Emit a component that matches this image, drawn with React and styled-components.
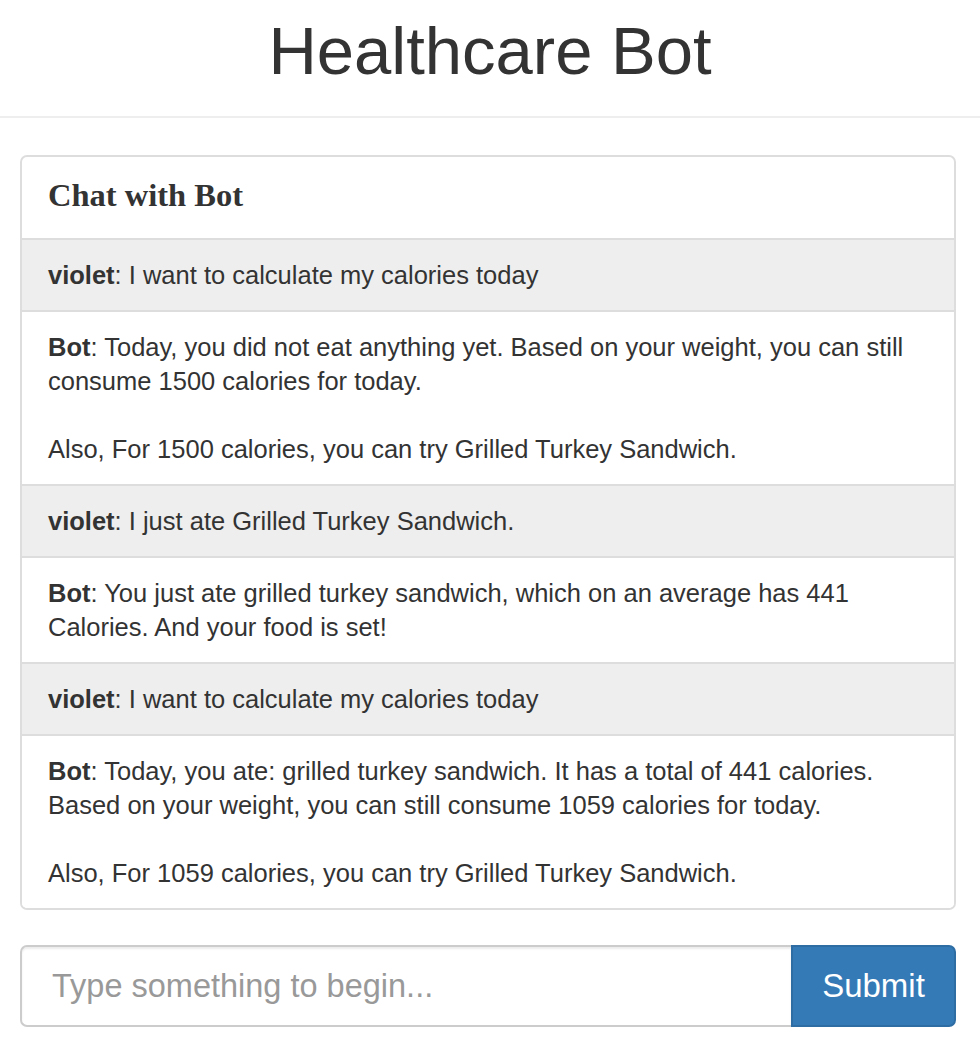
import React, { useState } from "react";
import styled, { createGlobalStyle } from "styled-components";

const GlobalStyle = createGlobalStyle`
  * { box-sizing: border-box; }
  body {
    margin: 0;
    background: #fff;
    color: #333;
    font-family: "Liberation Sans", Arial, sans-serif;
  }
`;

const messages = [
  { from: "violet", text: "I want to calculate my calories today" },
  {
    from: "Bot",
    text:
      "Today, you did not eat anything yet. Based on your weight, you can still consume 1500 calories for today.\n\nAlso, For 1500 calories, you can try Grilled Turkey Sandwich.",
  },
  { from: "violet", text: "I just ate Grilled Turkey Sandwich." },
  {
    from: "Bot",
    text:
      "You just ate grilled turkey sandwich, which on an average has 441 Calories. And your food is set!",
  },
  { from: "violet", text: "I want to calculate my calories today" },
  {
    from: "Bot",
    text:
      "Today, you ate: grilled turkey sandwich. It has a total of 441 calories. Based on your weight, you can still consume 1059 calories for today.\n\nAlso, For 1059 calories, you can try Grilled Turkey Sandwich.",
  },
];

function App() {
  const [value, setValue] = useState("");

  return (
    <>
      <GlobalStyle />
      <Header>
        <Title>Healthcare Bot</Title>
      </Header>
      <Container>
        <Panel>
          <PanelHeading>Chat with Bot</PanelHeading>
          {messages.map((m, i) => (
            <Message key={i} user={m.from !== "Bot"}>
              <b>{m.from}</b>: {m.text}
            </Message>
          ))}
        </Panel>
        <InputGroup>
          <TextInput
            placeholder="Type something to begin..."
            value={value}
            onChange={(e) => setValue(e.target.value)}
          />
          <SubmitButton type="button">Submit</SubmitButton>
        </InputGroup>
      </Container>
    </>
  );
}

export default App;

const Header = styled.header`
  padding: 14px 0 29px;
  border-bottom: 2px solid #eee;
  text-align: center;
`;

const Title = styled.h1`
  margin: 0;
  font-size: 67px;
  line-height: 73px;
  font-weight: 400;
  color: #333;
`;

const Container = styled.main`
  padding: 37px 24px 24px 20px;
`;

const Panel = styled.section`
  border: 2px solid #ddd;
  border-radius: 7px;
  overflow: hidden;
  background: #fff;
`;

const PanelHeading = styled.h3`
  margin: 0;
  padding: 19px 26px 24px;
  font-family: "Liberation Serif", "Times New Roman", serif;
  font-size: 32.5px;
  line-height: 38px;
  font-weight: 700;
  color: #333;
`;

const Message = styled.div`
  padding: 18px 20px 18px 26px;
  border-top: 2px solid #ddd;
  background: ${(p) => (p.user ? "#eeeeee" : "#fff")};
  font-size: 25.5px;
  line-height: 34px;
  white-space: pre-line;
  color: #333;

  b {
    font-weight: 700;
  }
`;

const InputGroup = styled.div`
  display: flex;
  margin-top: 35px;
  height: 82px;
`;

const TextInput = styled.input`
  flex: 1;
  min-width: 0;
  height: 100%;
  padding: 0 30px;
  border: 2px solid #ccc;
  border-right: none;
  border-radius: 7px 0 0 7px;
  font-family: "Liberation Sans", Arial, sans-serif;
  font-size: 32.5px;
  color: #555;
  box-shadow: inset 0 2px 2px rgba(0, 0, 0, 0.075);
  outline: none;

  &::placeholder {
    color: #999;
  }
`;

const SubmitButton = styled.button`
  width: 165px;
  height: 100%;
  border: 2px solid #2e6da4;
  border-radius: 0 7px 7px 0;
  background: #337ab7;
  color: #fff;
  font-family: "Liberation Sans", Arial, sans-serif;
  font-size: 33px;
  cursor: pointer;
`;
